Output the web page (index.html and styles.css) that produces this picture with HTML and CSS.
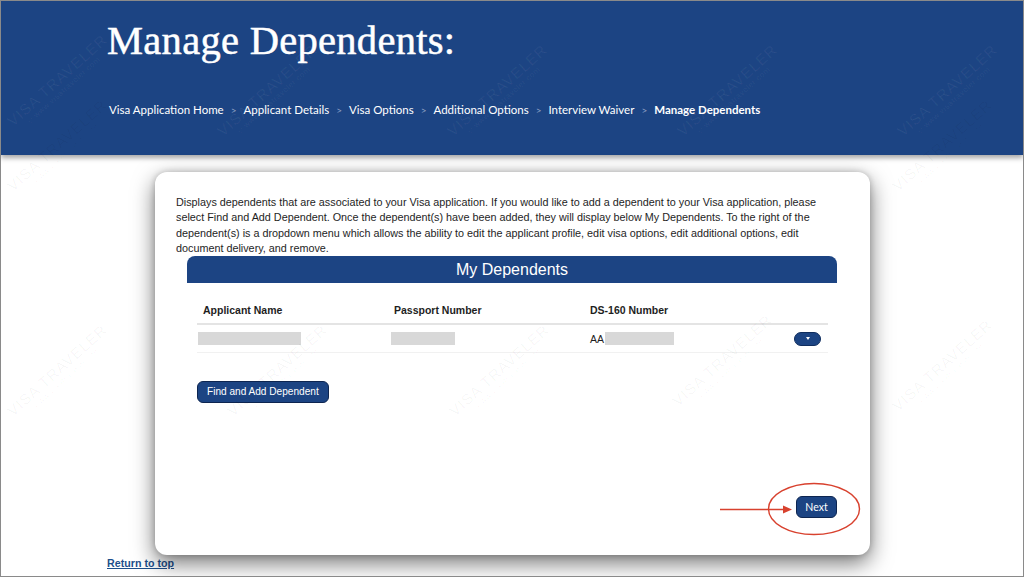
FILE: index.html
```html
<!DOCTYPE html>
<html lang="en">
<head>
<meta charset="utf-8">
<title>Manage Dependents</title>
<link rel="stylesheet" href="styles.css">
</head>
<body>
<div class="page">
  <header class="header">
    <h1 class="title">Manage Dependents:</h1>
    <nav class="crumbs">
      <span class="crumb">Visa Application Home</span><span class="sep">&gt;</span>
      <span class="crumb">Applicant Details</span><span class="sep">&gt;</span>
      <span class="crumb">Visa Options</span><span class="sep">&gt;</span>
      <span class="crumb">Additional Options</span><span class="sep">&gt;</span>
      <span class="crumb">Interview Waiver</span><span class="sep">&gt;</span>
      <span class="crumb current">Manage Dependents</span>
    </nav>
  </header>

  <main class="card">
    <p class="intro">Displays dependents that are associated to your Visa application. If you would like to add a dependent to your Visa application, please select Find and Add Dependent. Once the dependent(s) have been added, they will display below My Dependents. To the right of the dependent(s) is a dropdown menu which allows the ability to edit the applicant profile, edit visa options, edit additional options, edit document delivery, and remove.</p>
    <div class="panel-head">My Dependents</div>
    <div class="table">
      <div class="row head">
        <div class="cell">Applicant Name</div>
        <div class="cell">Passport Number</div>
        <div class="cell">DS-160 Number</div>
        <div class="cell"></div>
      </div>
      <div class="row data">
        <div class="cell first"><span class="blur w1"></span></div>
        <div class="cell"><span class="blur w2"></span></div>
        <div class="cell">AA<span class="blur w3"></span></div>
        <div class="cell action"><button class="drop" type="button"><span class="tri"></span></button></div>
      </div>
    </div>
    <div class="find-wrap"><button class="btn" type="button">Find and Add Dependent</button></div>
    <div class="next-wrap"><button class="btn next" type="button">Next</button></div>
    <svg class="callout" width="150" height="64" viewBox="0 0 150 64">
      <ellipse cx="99" cy="31" rx="45.5" ry="25.5" fill="none" stroke="#d8412e" stroke-width="1.4"/>
      <line x1="5" y1="31.5" x2="70" y2="31.5" stroke="#d8412e" stroke-width="1.4"/>
      <polygon points="77,31.5 68,27.5 68,35.5" fill="#d8412e"/>
    </svg>
  </main>

  <a class="totop" href="#">Return to top</a>

  <div class="wm wm-h" style="left:20px;top:110px">VISA TRAVELER<small>© www.visatraveler.com</small></div>
  <div class="wm wm-h" style="left:230px;top:120px">VISA TRAVELER<small>© www.visatraveler.com</small></div>
  <div class="wm wm-h" style="left:460px;top:120px">VISA TRAVELER<small>© www.visatraveler.com</small></div>
  <div class="wm wm-h" style="left:690px;top:120px">VISA TRAVELER<small>© www.visatraveler.com</small></div>
  <div class="wm wm-h" style="left:910px;top:120px">VISA TRAVELER<small>© www.visatraveler.com</small></div>
  <div class="wm" style="left:20px;top:175px">VISA TRAVELER<small>© www.visatraveler.com</small></div>
  <div class="wm" style="left:905px;top:175px">VISA TRAVELER<small>© www.visatraveler.com</small></div>
  <div class="wm" style="left:20px;top:400px">VISA TRAVELER<small>© www.visatraveler.com</small></div>
  <div class="wm" style="left:240px;top:400px">VISA TRAVELER<small>© www.visatraveler.com</small></div>
  <div class="wm" style="left:462px;top:400px">VISA TRAVELER<small>© www.visatraveler.com</small></div>
  <div class="wm" style="left:685px;top:390px">VISA TRAVELER<small>© www.visatraveler.com</small></div>
  <div class="wm" style="left:905px;top:395px">VISA TRAVELER<small>© www.visatraveler.com</small></div>
</div>
</body>
</html>
```

FILE: styles.css
```css
* { box-sizing: border-box; }
html, body { margin: 0; padding: 0; background: #ffffff; }
body { font-family: "Liberation Sans", Arial, sans-serif; color: #222; }

.page {
  position: relative;
  width: 1024px;
  height: 577px;
  overflow: hidden;
  border: 1px solid #8a8a8a;
  background: #ffffff;
}

.header {
  height: 154px;
  background: #1c4483;
  padding: 0 0 0 106px;
  box-shadow: 0 3px 5px rgba(0, 0, 0, 0.35);
  position: relative;
  z-index: 1;
  display: flex;
  flex-direction: column;
}

.title {
  margin: 16px 0 0 0;
  font-family: "Liberation Serif", "Times New Roman", serif;
  font-weight: 400;
  font-size: 40.5px;
  line-height: 48px;
  color: #ffffff;
  letter-spacing: 0.3px;
  -webkit-text-stroke: 0.5px #ffffff;
}

.crumbs {
  margin-top: 38px;
  display: flex;
  align-items: center;
  font-family: Lato, "Open Sans", sans-serif;
  font-size: 11.5px;
  color: #ffffff;
  padding-left: 2px;
}
.crumb { white-space: nowrap; }
.crumb.current { font-weight: 700; }
.sep { color: #8da0c4; margin: 0 7px; font-size: 10px; }

.card {
  position: relative;
  z-index: 2;
  width: 715px;
  height: 383px;
  margin: 17px 0 0 154px;
  background: #ffffff;
  border-radius: 12px;
  box-shadow: 0 8px 22px rgba(0, 0, 0, 0.55), 0 0 6px rgba(0, 0, 0, 0.2);
  padding: 23px 21px 0 21px;
  display: flex;
  flex-direction: column;
}

.intro {
  margin: 0;
  width: 652px;
  font-size: 10.8px;
  line-height: 15.35px;
  color: #1e1e1e;
}

.panel-head {
  margin: 0 0 0 11px;
  width: 650px;
  height: 27px;
  background: #1c4483;
  border-radius: 8px 8px 0 0;
  color: #ffffff;
  font-size: 16px;
  line-height: 28px;
  text-align: center;
}

.table {
  margin: 15px 0 0 21px;
  width: 631px;
}
.row {
  display: grid;
  grid-template-columns: 191px 196px 1fr 40px;
  align-items: center;
}
.row.head {
  height: 27px;
  padding-bottom: 2px;
  font-weight: 700;
  font-size: 10.5px;
  color: #1e1e1e;
  border-bottom: 2px solid #e4e4e4;
}
.row.head .cell { padding-left: 6px; }
.row.data {
  height: 28px;
  font-size: 10.5px;
  color: #1e1e1e;
  border-bottom: 1px solid #f1f1f1;
}
.row.data .cell { padding-left: 6px; display: flex; align-items: center; }
.row.data .cell.first { padding-left: 1px; }
.row.data .cell:nth-child(2) { padding-left: 3px; }

.blur { display: inline-block; height: 13px; background: #d8d8d8; }
.w1 { width: 103px; }
.w2 { width: 64px; }
.w3 { width: 69px; margin-left: 1px; }

.cell.action { justify-content: flex-end; padding-right: 7px; }
.drop {
  width: 27px;
  height: 14px;
  border-radius: 7px;
  border: 1px solid #0f2d5e;
  background: #1c4483;
  padding: 0;
  display: flex;
  align-items: center;
  justify-content: center;
}
.tri {
  width: 0;
  height: 0;
  border-left: 2.5px solid transparent;
  border-right: 2.5px solid transparent;
  border-top: 3px solid #ffffff;
}

.find-wrap { margin: 28px 0 0 21px; }
.btn {
  font-family: "Liberation Sans", Arial, sans-serif;
  background: #1c4483;
  color: #ffffff;
  border: 1px solid #0d2550;
  border-radius: 6px;
  font-size: 10.1px;
  height: 22px;
  padding: 0 9px;
  line-height: 20px;
}

.next-wrap {
  margin-top: auto;
  margin-bottom: 37px;
  display: flex;
  justify-content: flex-end;
  padding-right: 12px;
}
.btn.next {
  width: 41px;
  height: 22px;
  padding: 0;
  font-family: Lato, "Open Sans", sans-serif;
  font-size: 10.5px;
}

.callout {
  position: absolute;
  left: 560px;
  top: 306px;
}

.totop {
  display: block;
  margin: 2px 0 0 106px;
  width: max-content;
  font-size: 10.7px;
  font-weight: 700;
  color: #1d4f8c;
  text-decoration: underline;
  line-height: 12px;
}

.wm {
  position: absolute;
  z-index: 3;
  transform: rotate(-42deg);
  transform-origin: left bottom;
  font-family: "Liberation Sans", Arial, sans-serif;
  font-size: 15px;
  letter-spacing: 1px;
  color: rgba(0, 0, 0, 0.04);
  white-space: nowrap;
  pointer-events: none;
  line-height: 15px;
}
.wm small {
  display: block;
  font-size: 8px;
  letter-spacing: 0.5px;
  margin-left: 14px;
  line-height: 10px;
}
.wm-h { color: rgba(255, 255, 255, 0.06); }
```
